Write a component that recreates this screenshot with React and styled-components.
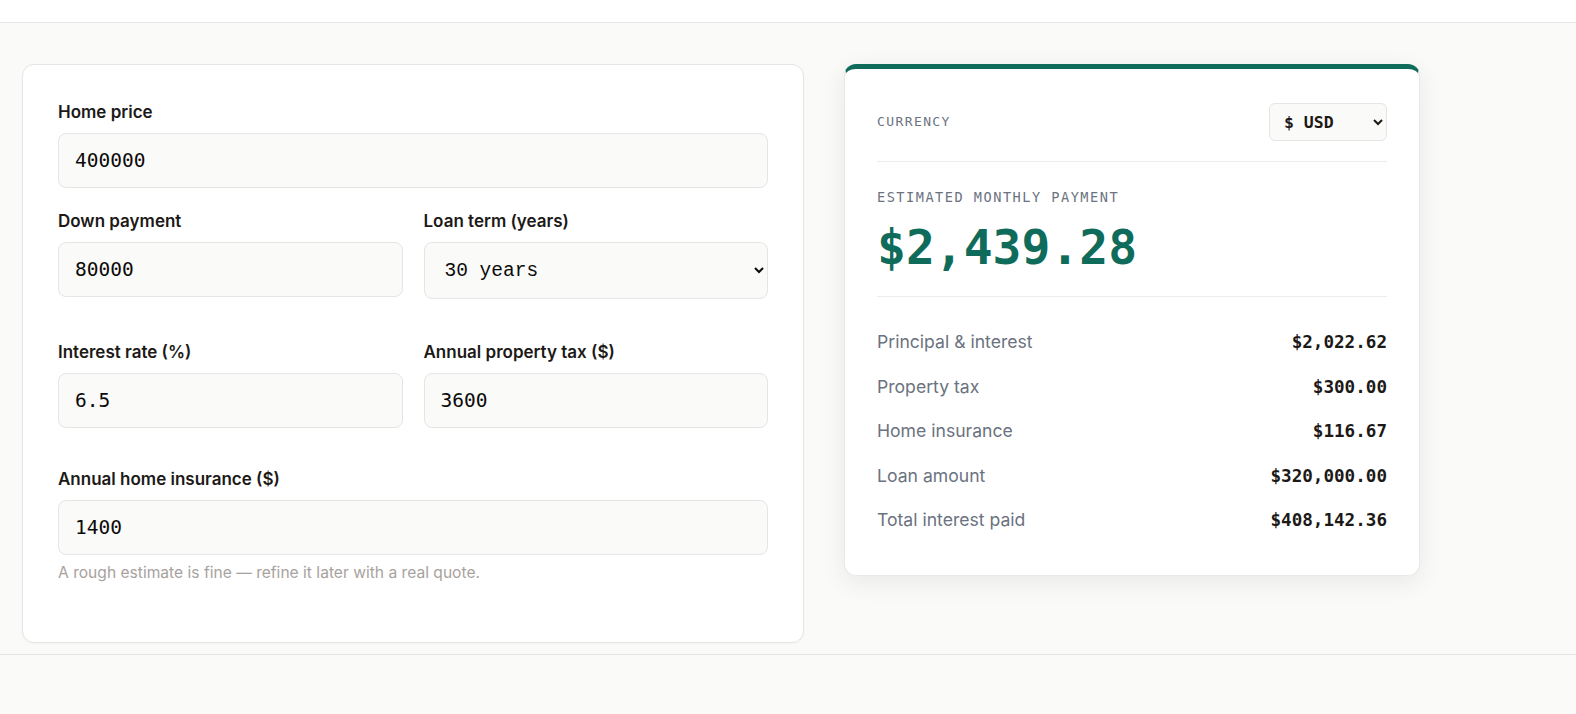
import React, { useState } from "react";
import styled, { createGlobalStyle } from "styled-components";

const GlobalStyle = createGlobalStyle`
  * { box-sizing: border-box; }
  html, body { margin: 0; padding: 0; }
  body {
    font-family: Inter, "Noto Sans", sans-serif;
    background: #fafaf9;
    color: #1c1917;
  }
`;

const mono = `"DejaVu Sans Mono", "Liberation Mono", monospace`;

const money = (n) =>
  "$" + n.toLocaleString("en-US", { minimumFractionDigits: 2, maximumFractionDigits: 2 });

const App = () => {
  const [price, setPrice] = useState("400000");
  const [down, setDown] = useState("80000");
  const [term, setTerm] = useState("30");
  const [rate, setRate] = useState("6.5");
  const [tax, setTax] = useState("3600");
  const [insurance, setInsurance] = useState("1400");
  const [currency, setCurrency] = useState("USD");

  const loan = Math.max(0, Number(price) - Number(down));
  const n = Number(term) * 12;
  const r = Number(rate) / 100 / 12;
  const principal = r ? (loan * r * Math.pow(1 + r, n)) / (Math.pow(1 + r, n) - 1) : loan / n;
  const monthlyTax = Number(tax) / 12;
  const monthlyIns = Number(insurance) / 12;
  const total = principal + monthlyTax + monthlyIns;

  const breakdown = [
    ["Principal & interest", money(principal)],
    ["Property tax", money(monthlyTax)],
    ["Home insurance", money(monthlyIns)],
    ["Loan amount", money(loan)],
    ["Total interest paid", "$408,142.36"],
  ];

  return (
    <Page>
      <GlobalStyle />
      <TopBar />
      <Main>
        <FormCard>
          <Field>
            <Label>Home price</Label>
            <Input value={price} onChange={(e) => setPrice(e.target.value)} />
          </Field>

          <Row gap={23}>
            <Field>
              <Label>Down payment</Label>
              <Input value={down} onChange={(e) => setDown(e.target.value)} />
            </Field>
            <Field>
              <Label>Loan term (years)</Label>
              <TermSelect value={term} onChange={(e) => setTerm(e.target.value)}>
                <option value="10">10 years</option>
                <option value="15">15 years</option>
                <option value="20">20 years</option>
                <option value="30">30 years</option>
              </TermSelect>
            </Field>
          </Row>

          <Row gap={43}>
            <Field>
              <Label>Interest rate (%)</Label>
              <Input value={rate} onChange={(e) => setRate(e.target.value)} />
            </Field>
            <Field>
              <Label>Annual property tax ($)</Label>
              <Input value={tax} onChange={(e) => setTax(e.target.value)} />
            </Field>
          </Row>

          <Field gap={41}>
            <Label>Annual home insurance ($)</Label>
            <Input value={insurance} onChange={(e) => setInsurance(e.target.value)} />
            <Hint>A rough estimate is fine — refine it later with a real quote.</Hint>
          </Field>
        </FormCard>

        <ResultCard>
          <CurrencyRow>
            <Eyebrow size={13}>Currency</Eyebrow>
            <CurrencySelect value={currency} onChange={(e) => setCurrency(e.target.value)}>
              <option value="USD">$ USD</option>
              <option value="EUR">€ EUR</option>
              <option value="GBP">£ GBP</option>
            </CurrencySelect>
          </CurrencyRow>

          <Summary>
            <Eyebrow size={13.6}>Estimated monthly payment</Eyebrow>
            <BigAmount>{money(Math.floor(total * 100) / 100)}</BigAmount>
          </Summary>

          <Breakdown>
            {breakdown.map(([label, value]) => (
              <BreakdownRow key={label}>
                <RowLabel>{label}</RowLabel>
                <RowValue>{value}</RowValue>
              </BreakdownRow>
            ))}
          </Breakdown>
        </ResultCard>
      </Main>
      <Footer />
    </Page>
  );
};

const Page = styled.div`
  min-height: 100vh;
  display: flex;
  flex-direction: column;
`;

const TopBar = styled.header`
  height: 23px;
  background: #ffffff;
  border-bottom: 1px solid #e7e5e4;
`;

const Main = styled.main`
  display: grid;
  grid-template-columns: 782px 576px;
  column-gap: 40px;
  align-items: start;
  padding: 41px 22px 11px;
`;

const FormCard = styled.section`
  background: #ffffff;
  border: 1px solid #e7e5e4;
  border-radius: 12px;
  box-shadow: 0 1px 2px rgba(0, 0, 0, 0.03);
  padding: 37px 35px 59px;
`;

const Field = styled.div`
  display: flex;
  flex-direction: column;
  margin-top: ${(p) => (p.gap ? p.gap + "px" : "0")};
`;

const Row = styled.div`
  display: grid;
  grid-template-columns: 1fr 1fr;
  column-gap: 21px;
  margin-top: ${(p) => p.gap}px;
`;

const Label = styled.label`
  font-size: 17px;
  line-height: 20px;
  font-weight: 600;
  color: #1c1917;
  margin-bottom: 11px;
`;

const Input = styled.input`
  height: 55px;
  width: 100%;
  padding: 0 16px;
  background: #fafaf9;
  border: 1px solid #e7e5e4;
  border-radius: 8px;
  font-family: ${mono};
  font-size: 19.5px;
  color: #0c0a09;
  outline: none;
`;

const TermSelect = styled.select`
  height: 57px;
  width: 100%;
  padding: 0 16px;
  background: #fafaf9;
  border: 1px solid #e7e5e4;
  border-radius: 8px;
  font-family: "Liberation Mono", monospace;
  font-size: 19.5px;
  color: #0c0a09;
  outline: none;
`;

const Hint = styled.p`
  margin: 8px 0 0;
  font-size: 15.6px;
  line-height: 20px;
  color: #a8a29e;
`;

const ResultCard = styled.aside`
  background: #ffffff;
  border: 1px solid #ebe9e6;
  border-top: 5px solid #0f6b5a;
  border-radius: 12px;
  box-shadow: 0 6px 24px rgba(28, 25, 23, 0.08);
  padding: 34px 32px 32px;
`;

const CurrencyRow = styled.div`
  display: flex;
  justify-content: space-between;
  align-items: center;
  padding-bottom: 20px;
  border-bottom: 1px solid #eeece9;
`;

const Eyebrow = styled.span`
  display: block;
  font-family: ${mono};
  font-size: ${(p) => p.size}px;
  line-height: 16px;
  letter-spacing: ${(p) => (p.size > 13 ? 1.5 : 1.4)}px;
  text-transform: uppercase;
  color: #6b7280;
`;

const CurrencySelect = styled.select`
  height: 38px;
  width: 118px;
  padding: 0 10px;
  background: #fafaf9;
  border: 1px solid #e7e5e4;
  border-radius: 6px;
  font-family: ${mono};
  font-size: 16.5px;
  font-weight: 700;
  color: #1c1917;
  outline: none;
`;

const Summary = styled.div`
  padding: 27px 0 22px;
  border-bottom: 1px solid #eeece9;
`;

const BigAmount = styled.div`
  margin-top: 16px;
  font-family: ${mono};
  font-size: 48px;
  line-height: 53px;
  font-weight: 700;
  color: #0f6b5a;
`;

const Breakdown = styled.div`
  padding-top: 23px;
`;

const BreakdownRow = styled.div`
  display: flex;
  justify-content: space-between;
  align-items: center;
  padding: 10px 0;
  line-height: 24.5px;
`;

const RowLabel = styled.span`
  font-size: 17.6px;
  color: #6b7280;
`;

const RowValue = styled.span`
  font-family: ${mono};
  font-size: 17.6px;
  font-weight: 700;
  color: #1c1917;
`;

const Footer = styled.footer`
  flex: 1;
  border-top: 1px solid #e7e5e4;
  background: #fafaf9;
`;

export default App;
